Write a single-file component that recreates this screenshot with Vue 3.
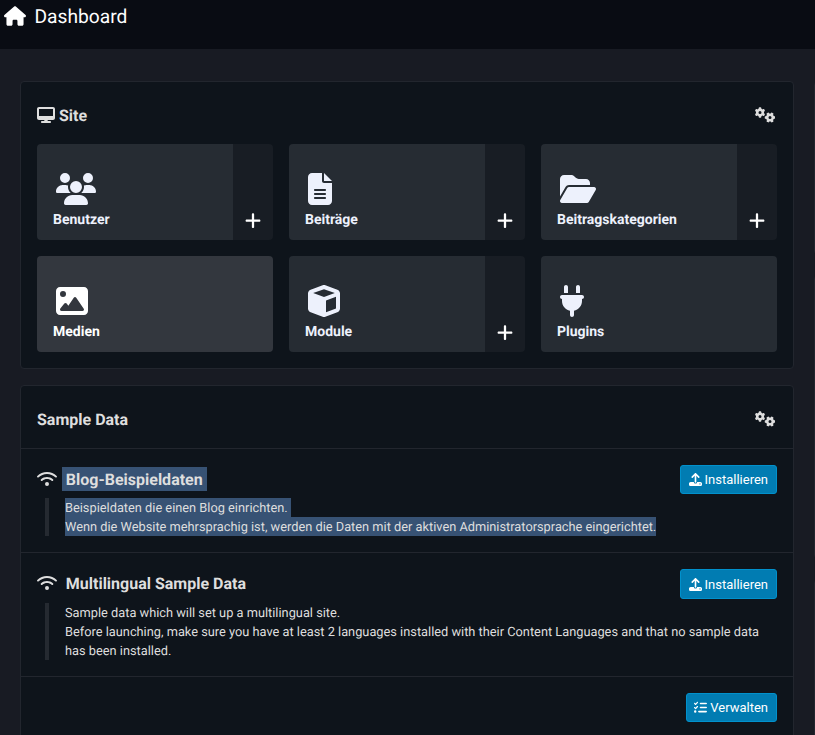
<script setup>
const icons = {
  home: { w: 576, d: 'M575.8 255.5c0 18-15 32.1-32 32.1h-32l.7 160.2c0 2.7-.2 5.4-.5 8.1V472c0 22.1-17.9 40-40 40H456c-1.1 0-2.2 0-3.3-.1c-1.4 .1-2.8 .1-4.2 .1H416 392c-22.1 0-40-17.9-40-40V448 384c0-17.7-14.3-32-32-32H256c-17.7 0-32 14.3-32 32v64 24c0 22.1-17.9 40-40 40H160 128.1c-1.5 0-3-.1-4.5-.2c-1.2 .1-2.4 .2-3.6 .2H104c-22.1 0-40-17.9-40-40V360c0-.9 0-1.9 .1-2.8V287.6H32c-18 0-32-14-32-32.1c0-9 3-17 10-24L266.4 8c7-7 15-8 22-8s15 2 21 7L564.8 231.5c8 7 12 15 11 24z' },
  desktop: { w: 576, d: 'M64 0C28.7 0 0 28.7 0 64V352c0 35.3 28.7 64 64 64H240l-10.7 32H160c-17.7 0-32 14.3-32 32s14.3 32 32 32H416c17.7 0 32-14.3 32-32s-14.3-32-32-32H346.7L336 416H512c35.3 0 64-28.7 64-64V64c0-35.3-28.7-64-64-64H64zM512 64V288H64V64H512z' },
  users: { w: 640, d: 'M144 0a80 80 0 1 1 0 160A80 80 0 1 1 144 0zM512 0a80 80 0 1 1 0 160A80 80 0 1 1 512 0zM0 298.7C0 239.8 47.8 192 106.7 192h42.7c15.9 0 31 3.5 44.6 9.7c-1.3 7.2-1.9 14.7-1.9 22.3c0 38.2 16.8 72.5 43.3 96c-.2 0-.4 0-.7 0H21.3C9.6 320 0 310.4 0 298.7zM405.3 320c-.2 0-.4 0-.7 0c26.6-23.5 43.3-57.8 43.3-96c0-7.6-.7-15-1.9-22.3c13.6-6.3 28.7-9.7 44.6-9.7h42.7C592.2 192 640 239.8 640 298.7c0 11.8-9.6 21.3-21.3 21.3H405.3zM224 224a96 96 0 1 1 192 0 96 96 0 1 1 -192 0zM128 485.3C128 411.7 187.7 352 261.3 352H378.7C452.3 352 512 411.7 512 485.3c0 14.7-11.9 26.7-26.7 26.7H154.7c-14.7 0-26.7-11.9-26.7-26.7z' },
  file: { w: 384, d: 'M64 0C28.7 0 0 28.7 0 64V448c0 35.3 28.7 64 64 64H320c35.3 0 64-28.7 64-64V160H256c-17.7 0-32-14.3-32-32V0H64zM256 0V128H384L256 0zM112 256H272c8.8 0 16 7.2 16 16s-7.2 16-16 16H112c-8.8 0-16-7.2-16-16s7.2-16 16-16zm0 64H272c8.8 0 16 7.2 16 16s-7.2 16-16 16H112c-8.8 0-16-7.2-16-16s7.2-16 16-16zm0 64H272c8.8 0 16 7.2 16 16s-7.2 16-16 16H112c-8.8 0-16-7.2-16-16s7.2-16 16-16z' },
  folder: { w: 576, d: 'M88.7 223.8L0 375.8V96C0 60.7 28.7 32 64 32H181.5c17 0 33.3 6.7 45.3 18.7l26.5 26.5c12 12 28.3 18.7 45.3 18.7H416c35.3 0 64 28.7 64 64v32H144c-22.8 0-43.8 12.1-55.3 31.8zm27.6 16.1C122.1 230 132.6 224 144 224H544c11.5 0 22 6.1 27.7 16.1s5.7 22.2-.1 32.1l-112 192C453.9 474 443.4 480 432 480H32c-11.5 0-22-6.1-27.7-16.1s-5.7-22.2 .1-32.1l112-192z' },
  image: { w: 512, d: 'M0 96C0 60.7 28.7 32 64 32H448c35.3 0 64 28.7 64 64V416c0 35.3-28.7 64-64 64H64c-35.3 0-64-28.7-64-64V96zM323.8 202.5c-4.5-6.6-11.9-10.5-19.8-10.5s-15.4 3.9-19.8 10.5l-87 127.6L170.7 297c-4.6-5.7-11.5-9-18.7-9s-14.2 3.3-18.7 9l-64 80c-5.8 7.2-6.9 17.1-2.9 25.4s12.4 13.6 21.6 13.6h96 32H424c8.9 0 17.1-4.9 21.2-12.8s3.6-17.4-1.4-24.7l-120-176zM112 192a48 48 0 1 0 0-96 48 48 0 1 0 0 96z' },
  cube: { w: 512, d: 'M234.5 5.7c13.9-5 29.1-5 43.1 0l192 68.6C495 83.4 512 107.5 512 134.6V377.4c0 27-17 51.2-42.5 60.3l-192 68.6c-13.9 5-29.1 5-43.1 0l-192-68.6C17 428.6 0 404.5 0 377.4V134.6c0-27 17-51.2 42.5-60.3l192-68.6zM256 66L82.3 128 256 190l173.7-62L256 66zm32 368.6l160-57.1v-188L288 246.6v188z' },
  plug: { w: 384, d: 'M96 0C78.3 0 64 14.3 64 32v96h64V32c0-17.7-14.3-32-32-32zM288 0c-17.7 0-32 14.3-32 32v96h64V32c0-17.7-14.3-32-32-32zM32 160c-17.7 0-32 14.3-32 32s14.3 32 32 32v32c0 77.4 55 142 128 156.8V480c0 17.7 14.3 32 32 32s32-14.3 32-32V412.8C297 398 352 333.4 352 256V224c17.7 0 32-14.3 32-32s-14.3-32-32-32H32z' },
  plus: { w: 448, d: 'M256 80c0-17.7-14.3-32-32-32s-32 14.3-32 32V224H48c-17.7 0-32 14.3-32 32s14.3 32 32 32H192V432c0 17.7 14.3 32 32 32s32-14.3 32-32V288H400c17.7 0 32-14.3 32-32s-14.3-32-32-32H256V80z' },
  wifi: { w: 640, d: 'M54.2 202.9C123.2 136.7 216.8 96 320 96s196.8 40.7 265.8 106.9c12.8 12.2 33 11.8 45.2-.9s11.8-33-.9-45.2C549.7 79.5 440.4 32 320 32S90.3 79.5 9.8 156.7C-2.9 169-3.3 189.2 8.9 202s32.5 13.2 45.2 .9zM320 256c56.8 0 108.6 21.1 148.2 56c13.3 11.7 33.5 10.4 45.2-2.8s10.4-33.5-2.8-45.2C459.8 219.2 393 192 320 192s-139.8 27.2-190.5 72c-13.3 11.7-14.5 31.9-2.8 45.2s31.9 14.5 45.2 2.8c39.5-34.9 91.3-56 148.2-56zm64 160a64 64 0 1 0 -128 0 64 64 0 1 0 128 0z' },
  upload: { w: 512, d: 'M288 109.3V352c0 17.7-14.3 32-32 32s-32-14.3-32-32V109.3l-73.4 73.4c-12.5 12.5-32.8 12.5-45.3 0s-12.5-32.8 0-45.3l128-128c12.5-12.5 32.8-12.5 45.3 0l128 128c12.5 12.5 12.5 32.8 0 45.3s-32.8 12.5-45.3 0L288 109.3zM64 352H192c0 35.3 28.7 64 64 64s64-28.7 64-64H448c35.3 0 64 28.7 64 64v32c0 35.3-28.7 64-64 64H64c-35.3 0-64-28.7-64-64V416c0-35.3 28.7-64 64-64zM432 456a24 24 0 1 0 0-48 24 24 0 1 0 0 48z' },
  tasks: { w: 512, d: 'M152.1 38.2c9.9 8.9 10.7 24 1.8 33.9l-72 80c-4.4 4.9-10.6 7.8-17.2 7.9s-12.9-2.4-17.6-7L7 113C-2.3 103.6-2.3 88.4 7 79s24.6-9.4 33.9 0l22.1 22.1 55.1-61.2c8.9-9.9 24-10.7 33.9-1.8zm0 160c9.9 8.9 10.7 24 1.8 33.9l-72 80c-4.4 4.9-10.6 7.8-17.2 7.9s-12.9-2.4-17.6-7L7 273c-9.4-9.4-9.4-24.6 0-33.9s24.6-9.4 33.9 0l22.1 22.1 55.1-61.2c8.9-9.9 24-10.7 33.9-1.8zM224 96c0-17.7 14.3-32 32-32H480c17.7 0 32 14.3 32 32s-14.3 32-32 32H256c-17.7 0-32-14.3-32-32zm0 160c0-17.7 14.3-32 32-32H480c17.7 0 32 14.3 32 32s-14.3 32-32 32H256c-17.7 0-32-14.3-32-32zM160 416c0-17.7 14.3-32 32-32H480c17.7 0 32 14.3 32 32s-14.3 32-32 32H192c-17.7 0-32-14.3-32-32zM48 368a48 48 0 1 1 0 96 48 48 0 1 1 0-96z' },
}
const gear = 'M308.5 135.3c7.1-6.3 9.9-16.2 6.2-25c-2.3-5.3-4.8-10.5-7.6-15.5L304 89.4c-3-5-6.3-9.9-9.8-14.6c-5.7-7.6-15.7-10.1-24.7-7.1l-28.2 9.3c-10.7-8.8-23-16-36.2-20.9L199 27.1c-1.9-9.3-9.1-16.7-18.5-17.8C173.9 8.4 167.2 8 160.4 8h-.7c-6.8 0-13.5 .4-20.1 1.2c-9.4 1.1-16.6 8.6-18.5 17.8L115 56.1c-13.3 5-25.5 12.1-36.2 20.9L50.5 67.8c-9-3-19-.5-24.7 7.1c-3.5 4.7-6.8 9.6-9.9 14.6l-3 5.3c-2.8 5-5.3 10.2-7.6 15.6c-3.7 8.7-.9 18.6 6.2 25l22.2 19.8C32.6 161.9 32 168.9 32 176s.6 14.1 1.7 20.9L11.5 216.7c-7.1 6.3-9.9 16.2-6.2 25c2.3 5.3 4.8 10.5 7.6 15.6l3 5.2c3 5.1 6.3 9.9 9.9 14.6c5.7 7.6 15.7 10.1 24.7 7.1l28.2-9.3c10.7 8.8 23 16 36.2 20.9l6.1 29.1c1.9 9.3 9.1 16.7 18.5 17.8c6.7 .8 13.5 1.2 20.4 1.2s13.7-.4 20.4-1.2c9.4-1.1 16.6-8.6 18.5-17.8l6.1-29.1c13.3-5 25.5-12.1 36.2-20.9l28.2 9.3c9 3 19 .5 24.7-7.1c3.5-4.7 6.8-9.5 9.8-14.6l3.1-5.4c2.8-5 5.3-10.2 7.6-15.5c3.7-8.7 .9-18.6-6.2-25l-22.2-19.8c1.1-6.8 1.7-13.8 1.7-20.9s-.6-14.1-1.7-20.9l22.2-19.8zM112 176a48 48 0 1 1 96 0 48 48 0 1 1 -96 0z'

const box = (name) => `0 0 ${icons[name].w} 512`

const tiles = [
  { label: 'Benutzer', icon: 'users', add: true },
  { label: 'Beiträge', icon: 'file', add: true },
  { label: 'Beitragskategorien', icon: 'folder', add: true },
  { label: 'Medien', icon: 'image', hover: true },
  { label: 'Module', icon: 'cube', add: true },
  { label: 'Plugins', icon: 'plug' },
]
const samples = [
  {
    title: 'Blog-Beispieldaten',
    selected: true,
    lines: ['Beispieldaten die einen Blog einrichten.', 'Wenn die Website mehrsprachig ist, werden die Daten mit der aktiven Administratorsprache eingerichtet.'],
  },
  {
    title: 'Multilingual Sample Data',
    selected: false,
    lines: ['Sample data which will set up a multilingual site.', 'Before launching, make sure you have at least 2 languages installed with their Content Languages and that no sample data has been installed.'],
  },
]
</script>

<template>
  <div class="page">
    <header class="topbar">
      <svg class="home" :viewBox="box('home')"><path :d="icons.home.d" /></svg>
      <h1>Dashboard</h1>
    </header>
    <div class="columns">
      <main class="column">
        <section class="card">
          <div class="card-head">
            <svg class="desktop" :viewBox="box('desktop')"><path :d="icons.desktop.d" /></svg>
            <h2>Site</h2>
            <svg class="gears" viewBox="0 0 640 512">
              <path :d="gear" />
              <path :d="gear" transform="translate(480 336) rotate(90) translate(-160 -176)" />
            </svg>
          </div>
          <div class="tiles">
            <div v-for="t in tiles" :key="t.label" class="tile">
              <a class="tile-main" :class="{ hover: t.hover }">
                <svg class="tile-icon" :viewBox="box(t.icon)"><path :d="icons[t.icon].d" /></svg>
                <span>{{ t.label }}</span>
              </a>
              <a v-if="t.add" class="tile-add">
                <svg class="plus" :viewBox="box('plus')"><path :d="icons.plus.d" /></svg>
              </a>
            </div>
          </div>
        </section>

        <section class="card">
          <div class="card-head">
            <h2>Sample Data</h2>
            <svg class="gears" viewBox="0 0 640 512">
              <path :d="gear" />
              <path :d="gear" transform="translate(480 336) rotate(90) translate(-160 -176)" />
            </svg>
          </div>
          <article v-for="s in samples" :key="s.title" class="sample" :class="{ selected: s.selected }">
            <div class="sample-head">
              <svg class="wifi" :viewBox="box('wifi')"><path :d="icons.wifi.d" /></svg>
              <h3>{{ s.title }}</h3>
              <button class="btn">
                <svg :viewBox="box('upload')"><path :d="icons.upload.d" /></svg>Installieren
              </button>
            </div>
            <div class="desc">
              <p v-for="(l, i) in s.lines" :key="i"><span>{{ l }}</span></p>
            </div>
          </article>
          <div class="card-foot">
            <button class="btn">
              <svg :viewBox="box('tasks')"><path :d="icons.tasks.d" /></svg>Verwalten
            </button>
          </div>
        </section>
      </main>
      <aside class="next-column">
        <div class="card next-a"></div>
        <div class="card next-b"></div>
        <div class="card next-c"></div>
      </aside>
    </div>
  </div>
</template>

<style>
body {
  background: #181b23;
  overflow: hidden;
}
</style>

<style scoped>
.page {
  width: 100%;
  height: 735px;
  overflow: hidden;
  background: #181b23;
  color: #dedede;
  font-family: Roboto, sans-serif;
  font-size: 12.8px;
  text-rendering: geometricPrecision;
}
* { box-sizing: border-box; }
svg { fill: currentColor; display: block; flex: none; }
h1, h2, h3, p { margin: 0; }
.topbar {
  height: 49px;
  background: #090c13;
  display: flex;
  align-items: flex-start;
  gap: 8.5px;
  padding: 5px 4px;
  color: #fff;
}
.home { width: 22px; height: 20px; margin-top: 1px; }
h1 { font-size: 19.2px; font-weight: 400; line-height: 23px; }
.columns {
  display: flex;
  gap: 20px;
  padding: 32px 0 0 20px;
  width: 1200px;
}
.column { width: 774px; flex: none; display: flex; flex-direction: column; gap: 16px; }
.card {
  background: #0e141b;
  border: 1px solid #22262e;
  border-radius: 4px;
}
.card-head {
  display: flex;
  align-items: center;
  height: 62px;
  padding: 4px 17.6px 0 16px;
}
.desktop { width: 18px; height: 16px; margin-right: 4px; }
h2, h3 { font-size: 16px; font-weight: 700; line-height: 20px; }
h2 { padding-top: 1px; }
.gears { width: 20px; height: 16px; margin-left: auto; }
.tiles {
  display: grid;
  grid-template-columns: repeat(3, 236px);
  grid-auto-rows: 96px;
  gap: 16px;
  padding: 0 16px 16px;
}
.tile { display: flex; border-radius: 4px; overflow: hidden; color: #edf1fc; }
.tile-main {
  flex: 1;
  display: flex;
  flex-direction: column;
  background: #262c33;
  padding: 29px 16px 0;
  font-size: 14px;
  font-weight: 700;
  line-height: 20px;
}
.tile-main span { margin-top: 5px; }
.tile-main.hover { background: #33373e; color: #fff; }
.tile-icon { height: 32px; margin-left: 3.3px; align-self: flex-start; }
.tile-add {
  width: 40px;
  background: #181d24;
  display: flex;
  align-items: flex-end;
  justify-content: center;
  padding-bottom: 10px;
  color: #fff;
}
.plus { width: 16px; height: 19.4px; overflow: visible; }
.sample { border-top: 1px solid #22262e; padding: 16px; }
.sample-head { display: flex; align-items: flex-start; height: 33px; }
.sample + .sample .sample-head { height: 34px; }
.sample + .sample .btn { height: 30px; }
.wifi { width: 20px; height: 16px; margin: 6px 0 0 .4px; }
h3 { line-height: 24px; margin: 2px 0 0 4.6px; padding: 1px 4px 0 3.8px; height: 24px; }
.btn {
  margin-left: auto;
  height: 29px;
  display: flex;
  align-items: center;
  gap: 3px;
  padding: 0 8px;
  border: 1px solid #0191cc;
  border-radius: 3px;
  background: #017cb2;
  color: #fff;
  font: 400 13px Roboto, sans-serif;
}
.btn svg { width: 13px; height: 13px; }
.card-foot .btn { padding-left: 7.6px; }
.desc {
  margin-left: 8px;
  border-left: 4px solid #252a31;
  padding-left: 16px;
  line-height: 19px;
  display: flow-root;
}
.desc p:first-child { padding-top: 1px; }
.desc p:last-child { margin-bottom: -1px; }
.selected h3, .selected .desc span { background: #375274; }
.selected .desc span { padding: 3px 0 1px; }
.selected .desc p:first-child span { padding-right: 3px; }
.card-foot { border-top: 1px solid #22262e; padding: 16px 16px 60px; display: flex; }
.next-column { width: 380px; flex: none; }
.next-a { height: 174px; }
.next-b { height: 284px; margin-top: 20px; }
.next-c { height: 200px; margin-top: 20px; }
</style>
